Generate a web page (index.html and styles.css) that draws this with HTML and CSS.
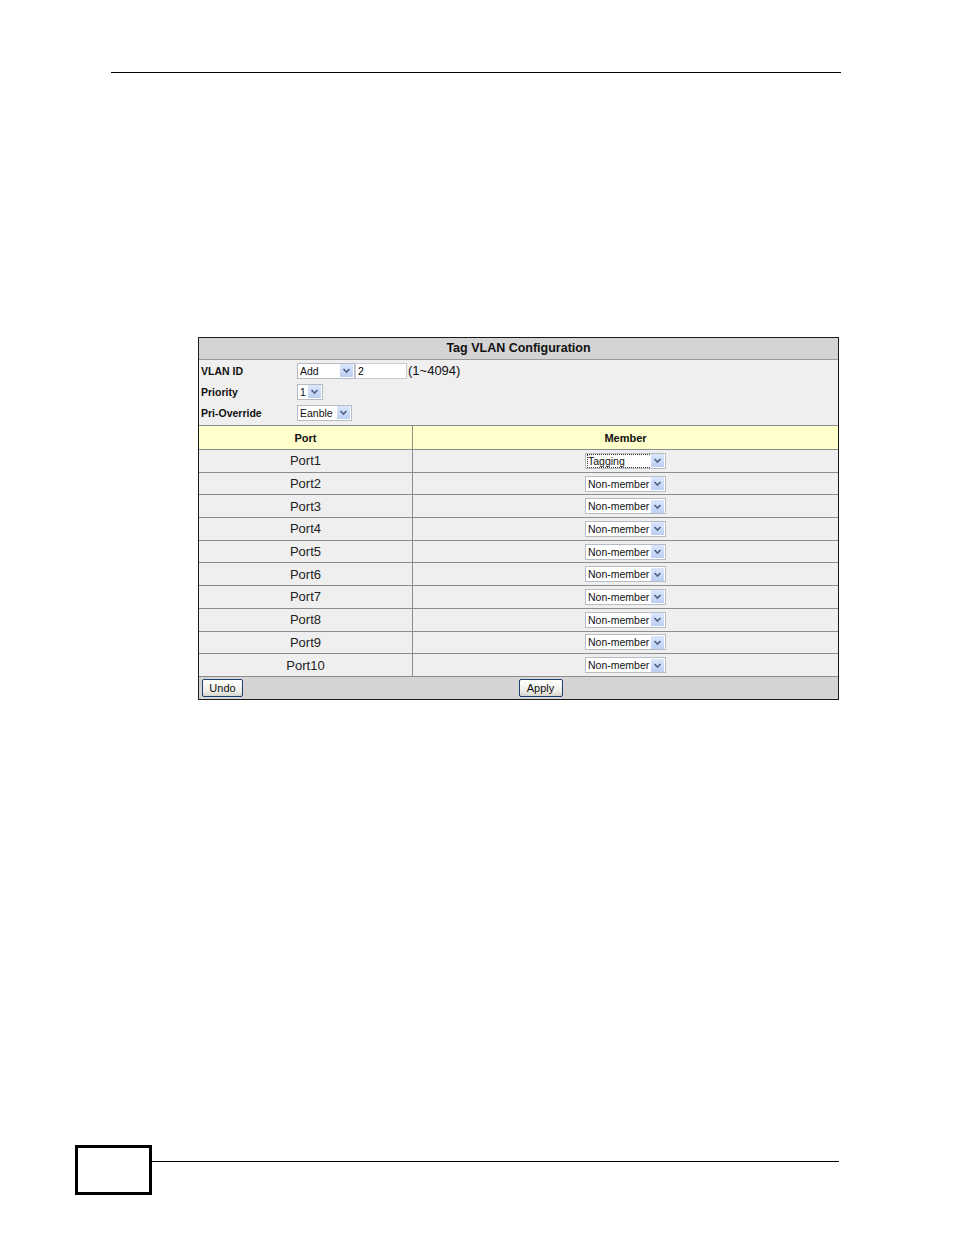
FILE: index.html
```html
<!DOCTYPE html>
<html>
<head>
<meta charset="utf-8">
<link rel="stylesheet" href="styles.css">
</head>
<body>
<div class="page">
  <div class="top-rule"></div>

  <div class="panel">
    <div class="panel-title">Tag VLAN Configuration</div>
    <div class="form">
      <div class="form-row">
        <span class="label">VLAN ID</span>
        <span class="ctrl">
          <span class="select sel-add"><span class="val">Add</span><span class="btn"><svg viewBox="0 0 13 13" width="13" height="13"><path d="M3.5 5 L6.5 8 L9.5 5" fill="none" stroke="#4d6185" stroke-width="1.6"/></svg></span></span><span class="textbox">2</span><span class="hint">(1~4094)</span>
        </span>
      </div>
      <div class="form-row">
        <span class="label">Priority</span>
        <span class="ctrl">
          <span class="select sel-pri"><span class="val">1</span><span class="btn"><svg viewBox="0 0 13 13" width="13" height="13"><path d="M3.5 5 L6.5 8 L9.5 5" fill="none" stroke="#4d6185" stroke-width="1.6"/></svg></span></span>
        </span>
      </div>
      <div class="form-row">
        <span class="label">Pri-Override</span>
        <span class="ctrl">
          <span class="select sel-ovr"><span class="val">Eanble</span><span class="btn"><svg viewBox="0 0 13 13" width="13" height="13"><path d="M3.5 5 L6.5 8 L9.5 5" fill="none" stroke="#4d6185" stroke-width="1.6"/></svg></span></span>
        </span>
      </div>
    </div>

    <div class="grid">
      <div class="hcell c1">Port</div>
      <div class="hcell c2">Member</div>

      <div class="cell c1 port">Port1</div>
      <div class="cell c2"><span class="select sel-mem"><span class="val"><span class="focus">Tagging</span></span><span class="btn"><svg viewBox="0 0 13 13" width="13" height="13"><path d="M3.5 5 L6.5 8 L9.5 5" fill="none" stroke="#4d6185" stroke-width="1.6"/></svg></span></span></div>

      <div class="cell c1 port">Port2</div>
      <div class="cell c2"><span class="select sel-mem"><span class="val">Non-member</span><span class="btn"><svg viewBox="0 0 13 13" width="13" height="13"><path d="M3.5 5 L6.5 8 L9.5 5" fill="none" stroke="#4d6185" stroke-width="1.6"/></svg></span></span></div>

      <div class="cell c1 port">Port3</div>
      <div class="cell c2"><span class="select sel-mem"><span class="val">Non-member</span><span class="btn"><svg viewBox="0 0 13 13" width="13" height="13"><path d="M3.5 5 L6.5 8 L9.5 5" fill="none" stroke="#4d6185" stroke-width="1.6"/></svg></span></span></div>

      <div class="cell c1 port">Port4</div>
      <div class="cell c2"><span class="select sel-mem"><span class="val">Non-member</span><span class="btn"><svg viewBox="0 0 13 13" width="13" height="13"><path d="M3.5 5 L6.5 8 L9.5 5" fill="none" stroke="#4d6185" stroke-width="1.6"/></svg></span></span></div>

      <div class="cell c1 port">Port5</div>
      <div class="cell c2"><span class="select sel-mem"><span class="val">Non-member</span><span class="btn"><svg viewBox="0 0 13 13" width="13" height="13"><path d="M3.5 5 L6.5 8 L9.5 5" fill="none" stroke="#4d6185" stroke-width="1.6"/></svg></span></span></div>

      <div class="cell c1 port">Port6</div>
      <div class="cell c2"><span class="select sel-mem"><span class="val">Non-member</span><span class="btn"><svg viewBox="0 0 13 13" width="13" height="13"><path d="M3.5 5 L6.5 8 L9.5 5" fill="none" stroke="#4d6185" stroke-width="1.6"/></svg></span></span></div>

      <div class="cell c1 port">Port7</div>
      <div class="cell c2"><span class="select sel-mem"><span class="val">Non-member</span><span class="btn"><svg viewBox="0 0 13 13" width="13" height="13"><path d="M3.5 5 L6.5 8 L9.5 5" fill="none" stroke="#4d6185" stroke-width="1.6"/></svg></span></span></div>

      <div class="cell c1 port">Port8</div>
      <div class="cell c2"><span class="select sel-mem"><span class="val">Non-member</span><span class="btn"><svg viewBox="0 0 13 13" width="13" height="13"><path d="M3.5 5 L6.5 8 L9.5 5" fill="none" stroke="#4d6185" stroke-width="1.6"/></svg></span></span></div>

      <div class="cell c1 port">Port9</div>
      <div class="cell c2"><span class="select sel-mem"><span class="val">Non-member</span><span class="btn"><svg viewBox="0 0 13 13" width="13" height="13"><path d="M3.5 5 L6.5 8 L9.5 5" fill="none" stroke="#4d6185" stroke-width="1.6"/></svg></span></span></div>

      <div class="cell c1 port">Port10</div>
      <div class="cell c2"><span class="select sel-mem"><span class="val">Non-member</span><span class="btn"><svg viewBox="0 0 13 13" width="13" height="13"><path d="M3.5 5 L6.5 8 L9.5 5" fill="none" stroke="#4d6185" stroke-width="1.6"/></svg></span></span></div>
    </div>

    <div class="panel-foot">
      <span class="button btn-undo">Undo</span>
      <div class="foot-center"><span class="button btn-apply">Apply</span></div>
    </div>
  </div>

  <div class="footer">
    <div class="page-box"></div>
    <div class="foot-rule"></div>
  </div>
</div>
</body>
</html>
```

FILE: styles.css
```css
html, body {
  margin: 0;
  padding: 0;
  background: #ffffff;
}

body {
  font-family: "Liberation Sans", Arial, sans-serif;
  color: #000;
}

.page {
  width: 954px;
  height: 1235px;
  padding-top: 72px;
  box-sizing: border-box;
}

.top-rule {
  margin-left: 111px;
  width: 730px;
  height: 1px;
  background: #000;
}

/* ---------- panel ---------- */
.panel {
  margin-top: 264px;
  margin-left: 198px;
  width: 641px;
  box-sizing: border-box;
  border: 1px solid #1a1a1a;
  background: #efefef;
}

.panel-title {
  height: 21px;
  line-height: 21px;
  background: #d4d4d4;
  border-bottom: 1px solid #9a9a9a;
  text-align: center;
  font-weight: bold;
  font-size: 12.5px;
  color: #111;
}

.form {
  height: 65px;
  padding-top: 0;
  box-sizing: border-box;
  background: #efefef;
}

.form-row {
  display: flex;
  align-items: center;
  height: 21px;
  padding-left: 2px;
}

.label {
  width: 96px;
  font-weight: bold;
  font-size: 10.5px;
  color: #111;
}

.ctrl {
  display: flex;
  align-items: center;
}

/* ---------- select widget ---------- */
.select {
  display: inline-flex;
  align-items: center;
  height: 16px;
  box-sizing: border-box;
  border: 1px solid #b7bcc4;
  background: #fff;
  font-size: 10.5px;
  color: #111;
}

.select .val {
  flex: 1;
  padding-left: 2px;
  line-height: 14px;
  white-space: nowrap;
  overflow: hidden;
}

.select .btn {
  width: 13px;
  height: 13px;
  margin-right: 1px;
  background: linear-gradient(#dbe6fb, #bccff3);
  border: 0;
  display: flex;
}

.sel-add { width: 58px; }
.sel-pri { width: 26px; }
.sel-ovr { width: 55px; }
.sel-mem { width: 81px; height: 16px; }

.focus {
  outline: 1px dotted #333;
  outline-offset: 0;
  padding-right: 26px;
}

.textbox {
  display: inline-block;
  width: 52px;
  height: 16px;
  box-sizing: border-box;
  border: 1px solid #c9cdd3;
  background: #fff;
  font-size: 10.5px;
  line-height: 14px;
  padding-left: 2px;
}

.hint {
  font-size: 13px;
  color: #111;
  padding-left: 1px;
}

/* ---------- port grid ---------- */
.grid {
  display: grid;
  grid-template-columns: 214px 1fr;
  grid-template-rows: 24px;
  grid-auto-rows: 22.7px;
}

.hcell,
.cell {
  display: flex;
  align-items: center;
  justify-content: center;
  box-sizing: border-box;
  border-top: 1px solid #8c8c8c;
}

.hcell {
  background: #ffffcc;
  font-weight: bold;
  font-size: 11px;
  color: #111;
}

.cell {
  background: #efefef;
}

.c1 {
  border-right: 1px solid #8c8c8c;
}

.port {
  font-size: 13px;
  color: #222;
}

/* ---------- footer of panel ---------- */
.panel-foot {
  display: flex;
  align-items: center;
  height: 22px;
  padding-left: 3px;
  background: #d4d4d4;
  border-top: 1px solid #8c8c8c;
}

.foot-center {
  flex: 1;
  display: flex;
  justify-content: center;
}

.button {
  display: inline-flex;
  align-items: center;
  justify-content: center;
  height: 18px;
  box-sizing: border-box;
  border: 1px solid #1f3f6e;
  border-radius: 2px;
  background: linear-gradient(#ffffff, #ececE6 70%, #d6d6ce);
  font-size: 11px;
  color: #111;
}

.btn-undo { width: 41px; }
.btn-apply { width: 44px; }

/* ---------- page footer ---------- */
.footer {
  margin-top: 445px;
  margin-left: 75px;
  display: flex;
  align-items: flex-start;
}

.page-box {
  width: 77px;
  height: 50px;
  box-sizing: border-box;
  border: 3px solid #000;
}

.foot-rule {
  margin-top: 16px;
  width: 687px;
  height: 1px;
  background: #000;
}
```
